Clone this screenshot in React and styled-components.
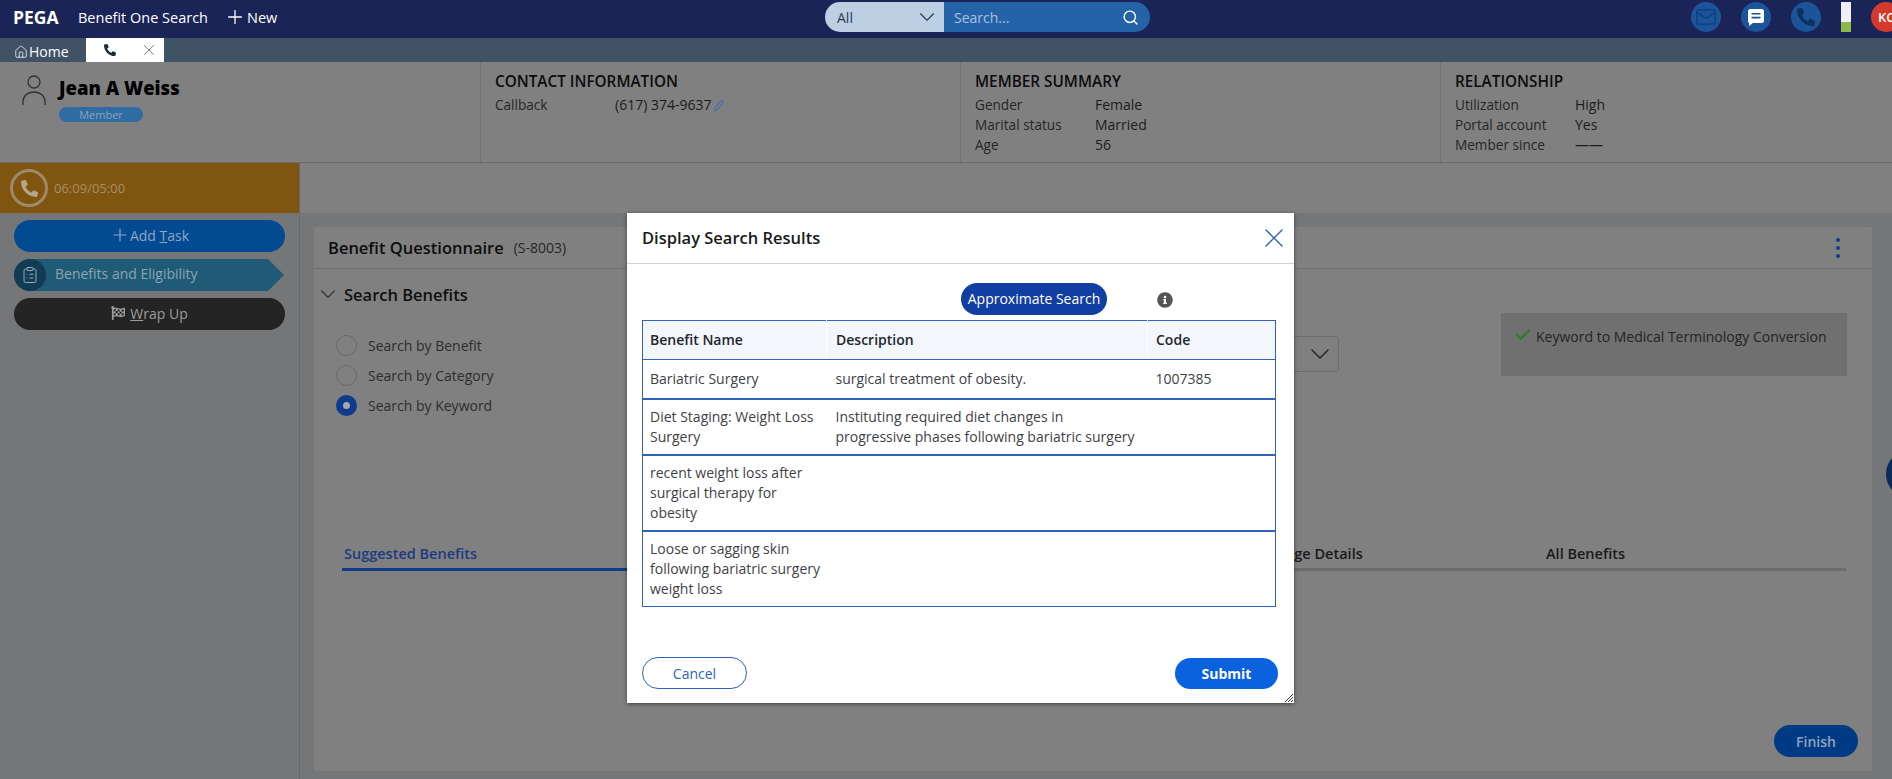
import React from "react";
import styled, { createGlobalStyle } from "styled-components";
import { FaPhoneAlt, FaInfoCircle, FaFlagCheckered } from "react-icons/fa";
import { Check, ChevronDown, ClipboardList, Home, Mail, Plus, Search, X } from "lucide-react";

const GlobalStyle = createGlobalStyle`
  html, body { margin: 0; padding: 0; }
  body { font-family: "Open Sans", "Noto Sans", sans-serif; font-size: 14px; color: #2e2e2e; }
  * { box-sizing: border-box; }
`;

const Page = styled.div`
  position: relative;
  width: 1892px;
  height: 779px;
  overflow: hidden;
  display: flex;
  flex-direction: column;
  background: #757678;
`;

const TopBar = styled.header`
  height: 38px;
  flex: none;
  background: #1a2456;
  display: grid;
  grid-template-columns: 825px 325px 1fr;
  align-items: start;
  color: #fff;
`;

const Brand = styled.div`
  display: flex;
  align-items: center;
  height: 34px;
  padding-left: 13px;
`;

const Logo = styled.span`
  font-weight: 700;
  font-size: 17.5px;
  width: 65px;
`;

const AppName = styled.span`
  width: 146px;
  font-size: 14.5px;
  white-space: nowrap;
`;

const NewLink = styled.span`
  display: flex;
  align-items: center;
  gap: 1px;
  font-size: 14.5px;
`;

const SearchBox = styled.div`
  margin-top: 2px;
  height: 30px;
  border-radius: 15px;
  overflow: hidden;
  display: grid;
  grid-template-columns: 119px 1fr;
`;

const ScopeSelect = styled.div`
  background: #bccfe3;
  color: #2c3a55;
  display: flex;
  align-items: center;
  justify-content: space-between;
  padding: 0 4px 0 12px;
  font-size: 14px;
`;

const SearchField = styled.div`
  background: #2463a8;
  color: #a9c3df;
  display: flex;
  align-items: center;
  justify-content: space-between;
  padding: 0 11px 0 10px;
  font-size: 14px;
  svg { color: #fff; }
`;

const TopIcons = styled.div`
  display: flex;
  justify-content: flex-end;
  gap: 20px;
  margin-right: -9px;
  padding-top: 2px;
`;

const IconCircle = styled.span`
  width: 30px;
  height: 30px;
  border-radius: 50%;
  background: #1c5499;
  display: flex;
  align-items: center;
  justify-content: center;
  color: ${(p) => p.$ink};
`;

const Meter = styled.span`
  width: 10px;
  height: 30px;
  background: linear-gradient(#eef0f4 0 20px, #8db84a 20px);
`;

const Avatar = styled.span`
  width: 30px;
  height: 30px;
  border-radius: 50%;
  background: #d5392b;
  color: #fff;
  font-size: 13px;
  font-weight: 600;
  display: flex;
  align-items: center;
  padding-left: 7px;
`;

const TabBar = styled.nav`
  height: 24px;
  flex: none;
  background: #3f5365;
  display: flex;
`;

const HomeTab = styled.span`
  width: 86px;
  padding-left: 14px;
  display: flex;
  align-items: center;
  gap: 1px;
  color: #fff;
  font-size: 14px;
  padding-top: 3px;
`;

const ActiveTab = styled.span`
  width: 78px;
  background: #fff;
  display: flex;
  align-items: center;
  justify-content: space-between;
  padding: 0 6px 1px 18px;
  color: #1d2b3a;
`;

const Summary = styled.section`
  height: 101px;
  flex: none;
  background: #808080;
  border-bottom: 1px solid #6b6b6b;
  display: grid;
  grid-template-columns: 480px 480px 480px 1fr;
`;

const SummaryBlock = styled.div`
  padding: 9px 0 0 14px;
  border-left: 1px solid #727272;
`;

const Identity = styled.div`
  padding: 13px 0 0 22px;
  display: flex;
  gap: 13px;
`;

const MemberName = styled.div`
  font-size: 18.5px;
  font-weight: 800;
  color: #000;
  line-height: 25px;
`;

const MemberBadge = styled.span`
  display: block;
  margin-top: 7px;
  width: 84px;
  height: 15px;
  border-radius: 8px;
  background: #2e6ca3;
  color: #8aa4bb;
  font-size: 11px;
  line-height: 15px;
  text-align: center;
`;

const BlockTitle = styled.h3`
  margin: 0 0 4px;
  font-size: 15.3px;
  font-weight: 600;
  line-height: 20px;
  color: #0c0c0c;
`;

const InfoRow = styled.div`
  display: grid;
  grid-template-columns: 120px auto;
  line-height: 20px;
  font-size: 13.6px;
  font-weight: 500;
  color: #262626;
`;

const InfoValue = styled.span`
  display: flex;
  align-items: center;
  gap: 2px;
  font-size: 14px;
  font-weight: 400;
  color: #1c1c1c;
`;

const Workspace = styled.div`
  flex: 1;
  display: flex;
  min-height: 0;
`;

const Sidebar = styled.aside`
  width: 300px;
  flex: none;
  border-right: 1px solid #67686a;
  display: flex;
  flex-direction: column;
`;

const CallBar = styled.div`
  height: 50px;
  background: #80550f;
  display: flex;
  align-items: center;
  gap: 6px;
  padding-left: 10px;
  color: #a5906a;
  font-size: 13px;
`;

const CallRing = styled.span`
  width: 38px;
  height: 38px;
  border-radius: 50%;
  border: 3px solid #9c8a6a;
  display: flex;
  align-items: center;
  justify-content: center;
  color: #b5a78e;
`;

const SideActions = styled.div`
  padding: 7px 14px;
  display: flex;
  flex-direction: column;
  gap: 7px;
`;

const SideButton = styled.button`
  height: 32px;
  width: 271px;
  border: 0;
  border-radius: 16px;
  background: ${(p) => p.$bg};
  color: ${(p) => p.$ink};
  font: 400 14px "Open Sans", sans-serif;
  display: flex;
  align-items: center;
  justify-content: center;
  gap: ${(p) => p.$gap}px;
  padding: 0 0 2px;
`;

const StageStep = styled.div`
  height: 32px;
  width: 270px;
  background: #1f5a76;
  color: #8ba5b3;
  clip-path: polygon(0 0, 254px 0, 270px 50%, 254px 100%, 0 100%);
  border-radius: 16px 0 0 16px;
  display: flex;
  align-items: center;
  gap: 9px;
  font-size: 14px;
  line-height: 18px;
`;

const StepIcon = styled.span`
  width: 32px;
  height: 32px;
  border-radius: 50%;
  background: #123b54;
  display: flex;
  align-items: center;
  justify-content: center;
  color: #9db0bc;
`;

const StepLabel = styled.span`
  padding-bottom: 2px;
`;

const Main = styled.main`
  flex: 1;
  display: flex;
  flex-direction: column;
  min-width: 0;
`;

const MainStrip = styled.div`
  height: 50px;
  flex: none;
  background: #808080;
`;

const CardWrap = styled.div`
  padding: 14px 20px 0 14px;
`;

const Card = styled.article`
  height: 544px;
  background: #808080;
  border-radius: 2px;
  display: flex;
  flex-direction: column;
`;

const CardHead = styled.div`
  height: 42px;
  flex: none;
  border-bottom: 1px solid #6d6d6d;
  padding: 0 32px 0 14px;
  display: flex;
  align-items: center;
  gap: 10px;
`;

const CardTitle = styled.h2`
  margin: 0;
  font-size: 16.5px;
  font-weight: 600;
  color: #0d0d0d;
`;

const CaseId = styled.span`
  font-size: 14px;
  color: #262626;
  flex: 1;
`;

const Kebab = styled.span`
  display: flex;
  flex-direction: column;
  gap: 4px;
  i { width: 4px; height: 4px; border-radius: 50%; background: #0f3f8c; }
`;

const SectionHead = styled.div`
  margin-top: 13px;
  padding-left: 1px;
  display: flex;
  align-items: center;
  gap: 3px;
  height: 24px;
  font-size: 16.5px;
  font-weight: 600;
  color: #101010;
  svg { color: #333; }
`;

const FormRow = styled.div`
  margin-top: 5px;
  height: 118px;
  padding-left: 22px;
  display: grid;
  grid-template-columns: 840px 163px 346px;
`;

const RadioList = styled.div`
  padding-top: 19px;
  display: flex;
  flex-direction: column;
`;

const RadioRow = styled.label`
  height: 30px;
  display: flex;
  align-items: center;
  gap: 11px;
  font-size: 14px;
  color: #2d2d2d;
`;

const RadioDot = styled.span`
  width: 21px;
  height: 21px;
  border-radius: 50%;
  border: ${(p) => p.$on ? "7px solid #103a8e" : "1px solid #696969"};
  background: ${(p) => p.$on ? "#a8a8a8" : "transparent"};
`;

const KeywordSelect = styled.div`
  margin-top: 25px;
  height: 36px;
  border: 1px solid #6c6c6c;
  border-radius: 3px;
  display: flex;
  justify-content: flex-end;
  align-items: center;
  padding-right: 2px;
  color: #222;
`;

const NoticeBox = styled.div`
  margin: 2px 0 0 162px;
  width: 346px;
  height: 63px;
  background: #707070;
  display: flex;
  align-items: flex-start;
  gap: 4px;
  padding: 14px 0 0 13px;
  font-size: 14px;
  color: #242424;
  white-space: nowrap;
  svg { color: #2e7a35; margin-top: -1px; }
`;

const TabStrip = styled.div`
  margin: 110px 26px 0 28px;
  height: 32px;
  border-bottom: 3px solid #6c6c6c;
  display: grid;
  grid-template-columns: repeat(5, 300.5px);
`;

const TabLabel = styled.span`
  padding: 3px 0 0 2px;
  font-size: 14.5px;
  font-weight: 600;
  line-height: 24px;
  color: ${(p) => p.$active ? "#1c3a80" : "#1a1a1a"};
  ${(p) => p.$active && "border-bottom: 3px solid #0f3c85; height: 32px;"}
`;

const CardFoot = styled.div`
  margin-top: auto;
  padding: 0 14px 14px 0;
  display: flex;
  justify-content: flex-end;
`;

const FinishButton = styled.button`
  width: 84px;
  height: 32px;
  border: 0;
  border-radius: 16px;
  background: #003a85;
  color: #92a3bb;
  font: 600 14px "Open Sans", sans-serif;
`;

const EdgeBubble = styled.span`
  position: absolute;
  left: 1886px;
  top: 450px;
  width: 48px;
  height: 48px;
  border-radius: 50%;
  background: #0c2a57;
`;

const Modal = styled.div`
  position: absolute;
  left: 627px;
  top: 213px;
  width: 667px;
  height: 490px;
  background: #fff;
  box-shadow: 0 1px 4px rgba(0, 0, 0, 0.5);
  display: flex;
  flex-direction: column;
`;

const ModalHead = styled.div`
  height: 51px;
  flex: none;
  border-bottom: 1px solid #cfd3d8;
  padding: 0 4px 0 15px;
  display: flex;
  align-items: center;
  justify-content: space-between;
  color: #2f5fc0;
`;

const ModalTitle = styled.h2`
  margin: 0 0 1px;
  font-size: 16.5px;
  font-weight: 600;
  color: #1a1a1a;
`;

const ModalBody = styled.div`
  flex: 1;
  padding: 19px 16px 0 15px;
`;

const SearchTools = styled.div`
  height: 37px;
  display: flex;
  align-items: flex-start;
  padding-left: 319px;
  gap: 50px;
`;

const ApproxButton = styled.button`
  width: 146px;
  height: 32px;
  border: 0;
  border-radius: 16px;
  background: #113ea3;
  color: #fff;
  font: 500 14px "Open Sans", sans-serif;
  white-space: nowrap;
  padding: 0 0 2px;
`;

const InfoIcon = styled.span`
  padding-top: 9px;
  color: #555;
  line-height: 0;
`;

const ResultTable = styled.table`
  width: 633px;
  table-layout: fixed;
  border-collapse: collapse;
  border: 1px solid #2f62bd;
  font-size: 14px;
  color: #3f4147;
  line-height: 20px;
`;

const HeadCell = styled.th`
  height: 39px;
  padding: 0 0 0 ${(p) => p.$pad}px;
  background: #f3f6fb;
  border-bottom: 1px solid #2f62bd;
  border-right: ${(p) => p.$last ? "0" : "1px solid #fff"};
  text-align: left;
  font-weight: 600;
  color: #23262e;
`;

const BodyRow = styled.tr`
  height: ${(p) => p.$h}px;
  border-bottom: 2px solid #2f62bd;
  &:last-child { border-bottom: 1px solid #2f62bd; }
`;

const BodyCell = styled.td`
  padding: 0 0 0 ${(p) => p.$pad}px;
  vertical-align: middle;
`;

const ModalFoot = styled.div`
  height: 46px;
  flex: none;
  padding: 0 16px 14px 15px;
  display: flex;
  justify-content: space-between;
  align-items: center;
  position: relative;
`;

const CancelButton = styled.button`
  width: 105px;
  height: 32px;
  border: 1px solid #2f62bd;
  border-radius: 16px;
  background: #fff;
  color: #2f62bd;
  font: 400 14px "Open Sans", sans-serif;
`;

const SubmitButton = styled.button`
  width: 103px;
  height: 31px;
  border: 0;
  border-radius: 16px;
  background: #0a62de;
  color: #fff;
  font: 700 14px "Open Sans", sans-serif;
`;

const ResizeGrip = styled.svg`
  position: absolute;
  right: 1px;
  bottom: 1px;
`;

const results = [
  { h: 39, name: "Bariatric Surgery", desc: "surgical treatment of obesity.", code: "1007385" },
  { h: 56, name: "Diet Staging: Weight Loss Surgery", desc: <>Instituting required diet changes in<br />progressive phases following bariatric surgery</> },
  { h: 76, name: <>recent weight loss after<br />surgical therapy for<br />obesity</> },
  { h: 76, name: <>Loose or sagging skin<br />following bariatric surgery<br />weight loss</> },
];

const PersonIcon = () => (
  <svg width="24" height="30" viewBox="0 0 24 30" fill="none" stroke="#333" strokeWidth="1.3">
    <circle cx="12" cy="7" r="6" />
    <path d="M1 30v-3c0-6 4.5-10 11-10s11 4 11 10v3" />
  </svg>
);

const PencilIcon = () => (
  <svg width="12" height="13" viewBox="0 0 12 13" fill="none" stroke="#4d6da8" strokeWidth="1.2">
    <path d="M8.5 1.5l2 1.5-6 7.5-3 1.3.6-3.2z" />
  </svg>
);

const ChatIcon = () => (
  <svg width="16" height="17" viewBox="0 0 16 17">
    <path fill="#fff" d="M2.5 0h11A2.5 2.5 0 0 1 16 2.5v9a2.5 2.5 0 0 1-2.5 2.5H5l-4 3v-3.2A2.5 2.5 0 0 1 0 11.5v-9A2.5 2.5 0 0 1 2.5 0z" />
    <path stroke="#1c5499" strokeWidth="1.6" d="M3.5 4.8h9M3.5 8.6h9" />
  </svg>
);

const App = () => {
  return (
    <Page>
      <GlobalStyle />
      <TopBar>
        <Brand>
          <Logo>PEGA</Logo>
          <AppName>Benefit One Search</AppName>
          <NewLink><Plus size={22} strokeWidth={1.4} />New</NewLink>
        </Brand>
        <SearchBox>
          <ScopeSelect>All<ChevronDown size={26} strokeWidth={1} /></ScopeSelect>
          <SearchField>Search...<Search size={17} strokeWidth={2} /></SearchField>
        </SearchBox>
        <TopIcons>
          <IconCircle $ink="#0f3f86"><Mail size={22} strokeWidth={1.6} /></IconCircle>
          <IconCircle><ChatIcon /></IconCircle>
          <IconCircle $ink="#10305f"><FaPhoneAlt size={18} /></IconCircle>
          <Meter />
          <Avatar>KC</Avatar>
        </TopIcons>
      </TopBar>

      <TabBar>
        <HomeTab><Home size={14} strokeWidth={1.3} />Home</HomeTab>
        <ActiveTab><FaPhoneAlt size={12} /><X size={18} strokeWidth={1} color="#555" /></ActiveTab>
      </TabBar>

      <Summary>
        <Identity>
          <PersonIcon />
          <div>
            <MemberName>Jean A Weiss</MemberName>
            <MemberBadge>Member</MemberBadge>
          </div>
        </Identity>
        <SummaryBlock>
          <BlockTitle>CONTACT INFORMATION</BlockTitle>
          <InfoRow><span>Callback</span><InfoValue>(617) 374-9637<PencilIcon /></InfoValue></InfoRow>
        </SummaryBlock>
        <SummaryBlock>
          <BlockTitle>MEMBER SUMMARY</BlockTitle>
          <InfoRow><span>Gender</span><InfoValue>Female</InfoValue></InfoRow>
          <InfoRow><span>Marital status</span><InfoValue>Married</InfoValue></InfoRow>
          <InfoRow><span>Age</span><InfoValue>56</InfoValue></InfoRow>
        </SummaryBlock>
        <SummaryBlock>
          <BlockTitle>RELATIONSHIP</BlockTitle>
          <InfoRow><span>Utilization</span><InfoValue>High</InfoValue></InfoRow>
          <InfoRow><span>Portal account</span><InfoValue>Yes</InfoValue></InfoRow>
          <InfoRow><span>Member since</span><InfoValue>——</InfoValue></InfoRow>
        </SummaryBlock>
      </Summary>

      <Workspace>
        <Sidebar>
          <CallBar>
            <CallRing><FaPhoneAlt size={17} /></CallRing>
            06:09/05:00
          </CallBar>
          <SideActions>
            <SideButton $bg="#024b93" $ink="#8fa6c0" $gap={0}><Plus size={20} strokeWidth={1.4} /><span>Add <u>T</u>ask</span></SideButton>
            <StageStep>
              <StepIcon><ClipboardList size={18} strokeWidth={1.3} /></StepIcon>
              <StepLabel>Benefits and Eligibility</StepLabel>
            </StageStep>
            <SideButton $bg="#242424" $ink="#9c9c9c" $gap={5}><FaFlagCheckered size={14} /><span><u>W</u>rap Up</span></SideButton>
          </SideActions>
        </Sidebar>

        <Main>
          <MainStrip />
          <CardWrap>
            <Card>
              <CardHead>
                <CardTitle>Benefit Questionnaire</CardTitle>
                <CaseId>(S-8003)</CaseId>
                <Kebab><i /><i /><i /></Kebab>
              </CardHead>
              <SectionHead><ChevronDown size={26} strokeWidth={1} />Search Benefits</SectionHead>
              <FormRow>
                <RadioList>
                  <RadioRow><RadioDot />Search by Benefit</RadioRow>
                  <RadioRow><RadioDot />Search by Category</RadioRow>
                  <RadioRow><RadioDot $on />Search by Keyword</RadioRow>
                </RadioList>
                <KeywordSelect><ChevronDown size={32} strokeWidth={1} /></KeywordSelect>
                <NoticeBox><Check size={18} strokeWidth={3.2} />Keyword to Medical Terminology Conversion</NoticeBox>
              </FormRow>
              <TabStrip>
                <TabLabel $active>Suggested Benefits</TabLabel>
                <TabLabel />
                <TabLabel />
                <TabLabel>Coverage Details</TabLabel>
                <TabLabel>All Benefits</TabLabel>
              </TabStrip>
              <CardFoot><FinishButton>Finish</FinishButton></CardFoot>
            </Card>
          </CardWrap>
        </Main>
      </Workspace>

      <EdgeBubble />

      <Modal>
        <ModalHead>
          <ModalTitle>Display Search Results</ModalTitle>
          <X size={32} strokeWidth={1} />
        </ModalHead>
        <ModalBody>
          <SearchTools>
            <ApproxButton>Approximate Search</ApproxButton>
            <InfoIcon><FaInfoCircle size={16} /></InfoIcon>
          </SearchTools>
          <ResultTable>
            <colgroup>
              <col width="184" />
              <col width="321" />
              <col width="128" />
            </colgroup>
            <thead>
              <tr>
                <HeadCell $pad={7}>Benefit Name</HeadCell>
                <HeadCell $pad={9}>Description</HeadCell>
                <HeadCell $pad={8} $last>Code</HeadCell>
              </tr>
            </thead>
            <tbody>
              {results.map((row, index) => (
                <BodyRow key={index} $h={row.h}>
                  <BodyCell $pad={7}>{row.name}</BodyCell>
                  <BodyCell $pad={9}>{row.desc}</BodyCell>
                  <BodyCell $pad={8}>{row.code}</BodyCell>
                </BodyRow>
              ))}
            </tbody>
          </ResultTable>
        </ModalBody>
        <ModalFoot>
          <CancelButton>Cancel</CancelButton>
          <SubmitButton>Submit</SubmitButton>
          <ResizeGrip width="9" height="9" viewBox="0 0 9 9" stroke="#333" strokeWidth="1">
            <path d="M1 9L9 1M4 9L9 4M7 9L9 7" />
          </ResizeGrip>
        </ModalFoot>
      </Modal>
    </Page>
  );
};

export default App;
